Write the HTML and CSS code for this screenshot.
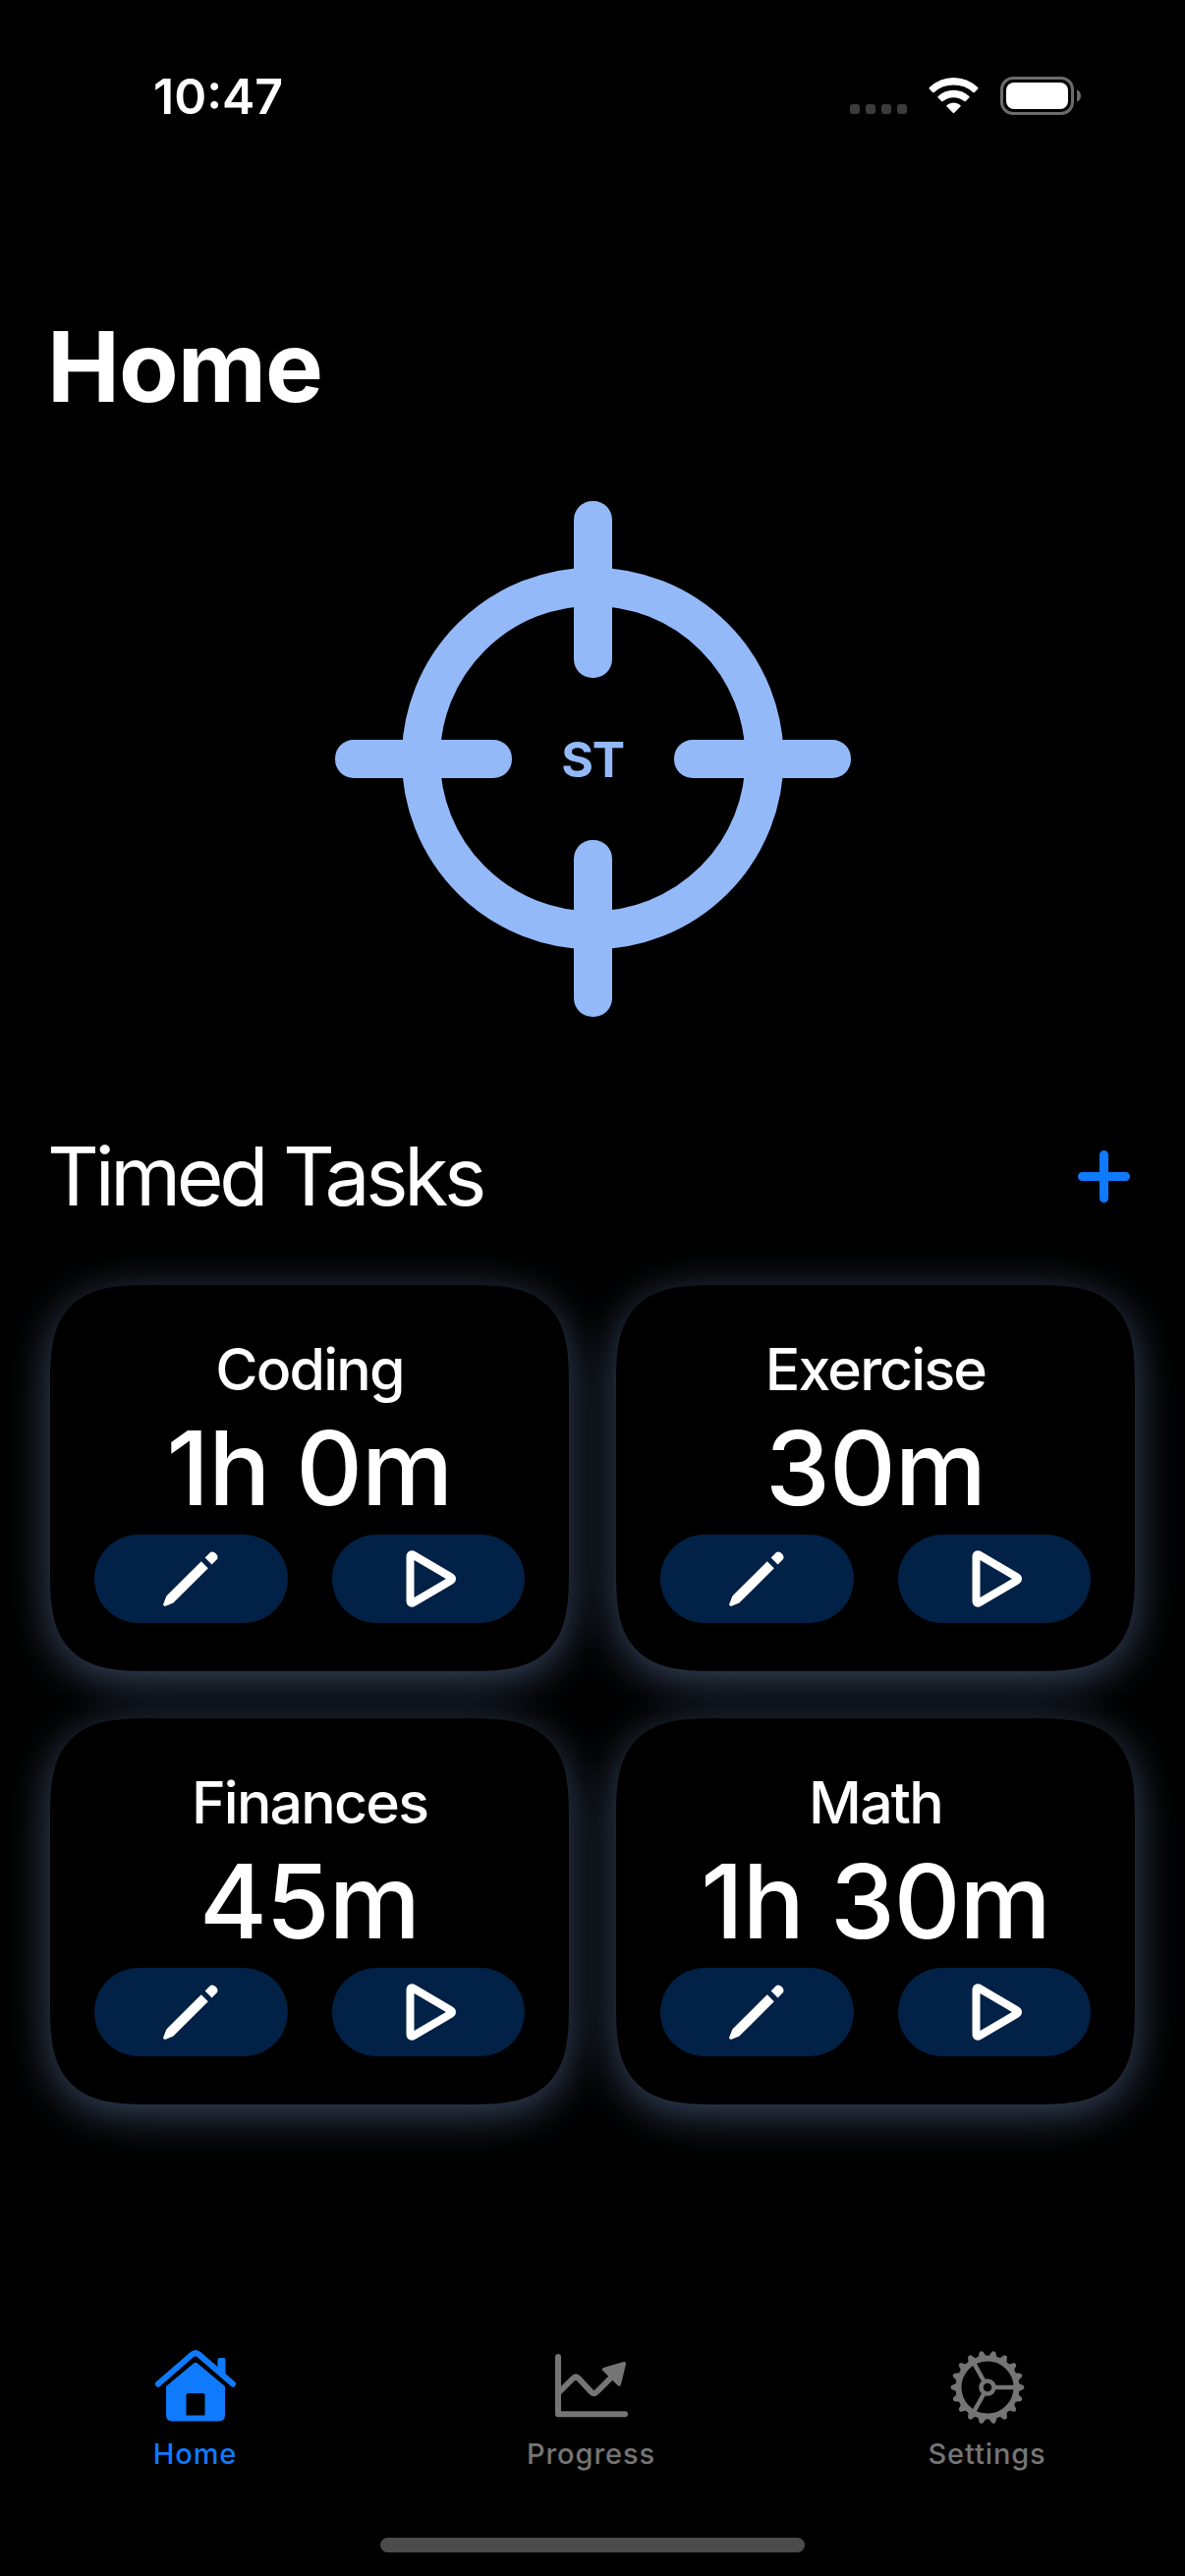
FILE: index.html
```html
<!DOCTYPE html>
<html lang="en">
<head>
<meta charset="UTF-8">
<meta name="viewport" content="width=device-width, initial-scale=1.0">
<title>Home</title>
<link rel="stylesheet" href="styles.css">
</head>
<body>

<!-- Shared icons -->
<svg class="icon-defs" width="0" height="0">
<symbol id="icon-pencil" viewBox="0 0 56 56">
<path d="M1 55.5 Q-0.3 55 0.3 53.4 L3.4 45.6 L38.8 10.2 L45.8 17.2 L10.4 52.6 L2.6 55.7 Q1.6 56 1 55.5 Z"/>
<path d="M42.6 6.4 L47.6 1.4 Q50.4 -0.8 53.4 2 Q56.9 5.4 54.7 8.3 L49.6 13.4 Z"/>
</symbol>
<symbol id="icon-play" viewBox="0 0 52 58">
<path d="M4.5 7 V51 Q4.5 55 8 53 L45 31.3 Q49 29 45 26.7 L8 5 Q4.5 3 4.5 7 Z"/>
</symbol>
</svg>

<!-- Status Bar -->
<div class="status-bar">
<span class="time">10:47</span>
<div class="status-icons">
<svg class="cell" width="58" height="10" viewBox="0 0 58 10">
<rect x="0" y="0" width="10" height="10" rx="3"/>
<rect x="16" y="0" width="10" height="10" rx="3"/>
<rect x="32" y="0" width="10" height="10" rx="3"/>
<rect x="48" y="0" width="10" height="10" rx="3"/>
</svg>
<svg class="wifi" width="51" height="37" viewBox="0 0 51 37">
<path d="M25.5 0 Q39.5 0 50.2 10 Q51 10.8 50.2 11.6 L46.9 15 Q46 15.7 45.2 15 Q37 7.6 25.5 7.6 Q14 7.6 5.8 15 Q5 15.7 4.1 15 L0.8 11.6 Q0 10.8 0.8 10 Q11.5 0 25.5 0 Z"/>
<path d="M25.5 12.8 Q34.5 12.8 41.3 19 Q42.1 19.8 41.3 20.6 L37.9 24 Q37.1 24.7 36.3 24 Q31.7 20.2 25.5 20.2 Q19.3 20.2 14.7 24 Q13.9 24.7 13.1 24 L9.7 20.6 Q8.9 19.8 9.7 19 Q16.5 12.8 25.5 12.8 Z"/>
<path d="M25.5 25.4 Q29.5 25.4 32.4 28 Q33.2 28.8 32.4 29.6 L26.3 35.8 Q25.5 36.6 24.7 35.8 L18.6 29.6 Q17.8 28.8 18.6 28 Q21.5 25.4 25.5 25.4 Z"/>
</svg>
<svg class="battery" width="82" height="39" viewBox="0 0 82 39">
<rect class="shell" x="1.5" y="1.5" width="72" height="36" rx="11.5"/>
<rect x="6" y="6" width="63" height="27" rx="8"/>
<path class="nub" d="M78 13.5 Q82 15 82 19.5 Q82 24 78 25.5 Z"/>
</svg>
</div>
</div>

<main class="content">
<h1 class="title">Home</h1>

<!-- Crosshair Logo -->
<svg class="logo" width="525" height="525" viewBox="0 0 525 525">
<circle cx="262.2" cy="262" r="174.8"/>
<rect x="243" y="0" width="39" height="180" rx="19"/>
<rect x="243" y="345" width="39" height="180" rx="19"/>
<rect x="0" y="243" width="180" height="39" rx="19"/>
<rect x="345" y="243" width="180" height="39" rx="19"/>
<text x="262.2" y="281" text-anchor="middle">ST</text>
</svg>

<!-- Timed Tasks Section -->
<div class="section-header">
<h2>Timed Tasks</h2>
<button class="add" aria-label="Add task">
<svg width="53" height="53" viewBox="0 0 53 53"><path d="M26.5 4.5 V48.5 M4.5 26.5 H48.5"/></svg>
</button>
</div>

<div class="task-grid">
<div class="card">
<h3>Coding</h3>
<p class="duration">1h 0m</p>
<div class="actions">
<button aria-label="Edit"><svg class="pencil"><use href="#icon-pencil"/></svg></button>
<button aria-label="Start"><svg class="play"><use href="#icon-play"/></svg></button>
</div>
</div>

<div class="card">
<h3>Exercise</h3>
<p class="duration">30m</p>
<div class="actions">
<button aria-label="Edit"><svg class="pencil"><use href="#icon-pencil"/></svg></button>
<button aria-label="Start"><svg class="play"><use href="#icon-play"/></svg></button>
</div>
</div>

<div class="card">
<h3>Finances</h3>
<p class="duration">45m</p>
<div class="actions">
<button aria-label="Edit"><svg class="pencil"><use href="#icon-pencil"/></svg></button>
<button aria-label="Start"><svg class="play"><use href="#icon-play"/></svg></button>
</div>
</div>

<div class="card">
<h3>Math</h3>
<p class="duration">1h 30m</p>
<div class="actions">
<button aria-label="Edit"><svg class="pencil"><use href="#icon-pencil"/></svg></button>
<button aria-label="Start"><svg class="play"><use href="#icon-play"/></svg></button>
</div>
</div>
</div>
</main>

<!-- Tab Bar -->
<nav class="tab-bar">
<a class="tab active">
<svg width="82" height="76" viewBox="0 0 82 76">
<path class="line" d="M3 34.5 L37.5 4.6 Q41 1.6 44.5 4.6 L79 34.5"/>
<path d="M63.5 10 Q63.5 8 65.5 8 H69.5 Q71.5 8 71.5 10 V28 L63.5 21 Z"/>
<path fill-rule="evenodd" d="M11 37 L39 13.5 Q41 12 43 13.5 L71 37 V66 Q71 72.5 64.5 72.5 H17.5 Q11 72.5 11 66 Z M33.5 44 Q31.5 44 31.5 46 V66.5 H50.5 V46 Q50.5 44 48.5 44 Z"/>
</svg>
<span>Home</span>
</a>
<a class="tab">
<svg width="76" height="76" viewBox="0 0 76 76">
<path class="line" d="M4 7 V65.2 H72"/>
<path class="line" d="M4 44 L19 29 Q22 26 25 29 L37.500 42.500 Q40.500 45.500 43.500 42.500 L61 25"/>
<path d="M50 18 L70.500 12 Q73.500 11.500 73 14.500 L68 35 Q67 38 64.500 36 L49.500 21 Q48 19 50 18 Z"/>
</svg>
<span>Progress</span>
</a>
<a class="tab">
<svg class="gear" width="76" height="76" viewBox="-38 -38 76 76">
<circle r="29.5" stroke-width="6"/>
<circle r="6.5" stroke-width="4.5"/>
<path stroke-width="4.5" d="M8 0 H28 M-4 -7 L-14 -25 M-4 7 L-14 25"/>
<g id="teeth"></g>
</svg>
<span>Settings</span>
</a>
</nav>
<div class="home-indicator"></div>

<script>
// Draw the gear teeth around the rim
let teeth = '';
for (let i = 0; i < 18; i++) {
teeth += '<path class="tooth" transform="rotate(' + (i * 20) + ')" d="M31 -4.5 L36.3 -2 Q37.3 -1.5 37.3 0 Q37.3 1.5 36.3 2 L31 4.5 Z"/>';
}
document.getElementById('teeth').innerHTML = teeth;
</script>

</body>
</html>
```
FILE: styles.css
```css
* {
box-sizing: border-box;
}

body {
margin: 0;
width: 1206px;
height: 2622px;
background-color: #000;
color: #fff;
font-family: Inter, "Liberation Sans", sans-serif;
display: flex;
flex-direction: column;
overflow: hidden;
}

h1, h2, h3, p {
margin: 0;
}

button {
border: none;
padding: 0;
background: none;
color: inherit;
cursor: pointer;
}

svg {
display: block;
}

.icon-defs {
position: absolute;
}

/* Status bar */
.status-bar {
display: flex;
justify-content: space-between;
align-items: flex-start;
height: 177px;
padding: 78px 106px 0 156px;
}

.time {
font-size: 50px;
font-weight: 600;
line-height: 40px;
letter-spacing: 0;
}

.status-icons {
display: flex;
fill: #fff;
}

.cell {
margin-top: 28px;
fill: #3b3b3b;
}

.wifi {
margin: 1px 22px 0 22px;
}

.shell {
fill: none;
stroke: #6b6b6b;
stroke-width: 3;
}

.nub {
fill: #6b6b6b;
}

/* Main content */
.content {
flex: 1;
display: flex;
flex-direction: column;
padding: 136px 51px 0 48px;
}

.title {
font-size: 99px;
font-weight: 700;
line-height: 120px;
letter-spacing: -1px;
}

.logo {
margin: 77px 0 0 293px;
fill: #93b9f9;
}

.logo circle {
fill: none;
stroke: #93b9f9;
stroke-width: 39;
}

.logo text {
font-size: 50px;
font-weight: 700;
letter-spacing: -1px;
}

.section-header {
display: flex;
justify-content: space-between;
align-items: center;
height: 100px;
margin-top: 112px;
padding-right: 5px;
}

.section-header h2 {
font-size: 82px;
font-weight: 400;
line-height: 100px;
letter-spacing: -4.3px;
padding-top: 2px;
}

.add svg {
fill: none;
stroke: #0f7afb;
stroke-width: 9;
stroke-linecap: round;
}

/* Task cards */
.task-grid {
display: grid;
grid-template-columns: 528px 528px;
grid-auto-rows: 393px;
gap: 48px;
margin: 61px 0 0 3px;
}

.card {
background-color: #000;
border-radius: 76px;
padding: 49px 45px 0;
text-align: center;
box-shadow: 0 9px 45px rgba(147, 185, 249, 0.4);
}

/* Smoother corners where the browser can draw them */
@supports (corner-shape: superellipse(1.6)) {
.card {
border-radius: 104px;
corner-shape: superellipse(1.6);
}
}

.card h3 {
font-size: 59px;
font-weight: 450;
line-height: 74px;
letter-spacing: -1.8px;
}

.duration {
font-size: 105px;
font-weight: 500;
line-height: 126px;
letter-spacing: -1px;
}

.actions {
display: flex;
gap: 45px;
margin-top: 5px;
}

.actions button {
display: flex;
flex: 1;
justify-content: center;
align-items: center;
height: 90px;
border-radius: 45px;
background-color: #022146;
}

.pencil {
width: 56px;
height: 56px;
fill: #fff;
}

.play {
width: 52px;
height: 58px;
margin-left: 7px;
fill: none;
stroke: #fff;
stroke-width: 8;
stroke-linejoin: round;
}

/* Tab bar */
.tab-bar {
display: flex;
height: 191px;
margin-left: -3px;
}

.tab {
flex: 1;
display: flex;
flex-direction: column;
align-items: center;
color: #757575;
fill: #757575;
font-size: 29px;
font-weight: 500;
line-height: 36px;
letter-spacing: 0.9px;
}

.tab span {
margin-top: 12px;
}

.active {
color: #0f7afb;
fill: #0f7afb;
}

.line {
fill: none;
stroke: #757575;
stroke-width: 6;
stroke-linecap: round;
stroke-linejoin: round;
}

.active .line {
stroke: #0f7afb;
}

.gear circle,
.gear path {
fill: none;
stroke: #757575;
}

.gear .tooth {
fill: #757575;
stroke: none;
}

.home-indicator {
width: 432px;
height: 15px;
margin: 0 auto 24px;
border-radius: 8px;
background-color: #4b4b4b;
}
```
